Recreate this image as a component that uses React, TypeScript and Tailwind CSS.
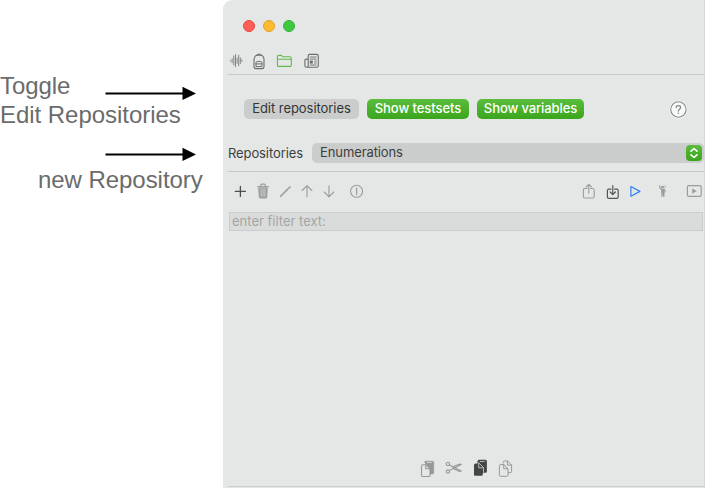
import type { ReactNode } from "react";

type IconProps = { w: number; h: number; className?: string; children: ReactNode };

function Icon({ w, h, className = "", children }: IconProps) {
  return (
    <svg
      width={w}
      height={h}
      viewBox={`0 0 ${w} ${h}`}
      fill="none"
      stroke="currentColor"
      strokeWidth="1.1"
      strokeLinecap="round"
      strokeLinejoin="round"
      className={`shrink-0 ${className}`}
    >
      {children}
    </svg>
  );
}

function Arrow({ className = "" }: { className?: string }) {
  return (
    <Icon w={92} h={14} className={`text-black ${className}`}>
      <path d="M.5 7.5H79" strokeWidth="2" strokeLinecap="butt" />
      <path d="M77.5 .7L91 7.5L77.5 14Z" fill="currentColor" stroke="none" />
    </Icon>
  );
}

function Notes() {
  return (
    <div className="h-[488px] w-[223px] shrink-0 overflow-hidden whitespace-nowrap bg-white pt-[71px] font-['Liberation_Sans',Arial,sans-serif] text-[24px] leading-[29px] text-[#6b6b6b]">
      <div className="flex h-[29px]">
        <span className="w-[105px] tracking-[-0.1px]">Toggle</span>
        <Arrow className="mt-[15px]" />
      </div>
      <div className="tracking-[-0.04px]">Edit Repositories</div>
      <Arrow className="ml-[105px] mt-[18px]" />
      <div className="ml-[38px] mt-[4px] tracking-[-0.05px]">new Repository</div>
    </div>
  );
}

function TitleBar() {
  return (
    <div className="ml-[20px] flex h-[52px] gap-2 pt-[20px]">
      <div className="size-3 rounded-full border border-[#e5473f] bg-[#fe5f57]" />
      <div className="size-3 rounded-full border border-[#e2a12c] bg-[#febb2e]" />
      <div className="size-3 rounded-full border border-[#32b334] bg-[#3ec840]" />
    </div>
  );
}

function Navigator() {
  return (
    <div className="ml-[5px] flex h-[23px] items-start border-b border-[#c6c8c7] pl-px pt-px text-[#6c6e6d]">
      <Icon w={14} h={16}>
        <path
          d="M1.4 7v1.4M3.1 5.4v4.8M4.8 2.6v9.8M6.5 1.2v13M8.1 4.6v6.2M9.7 1.8v11.4M11.3 4.4v6.6M12.8 6.4v2.4"
          strokeWidth="0.8"
          strokeLinecap="butt"
        />
      </Icon>
      <Icon w={12} h={17} className="ml-[10px]">
        <path d="M3.6 2.4Q6 -.4 8.4 2.4" />
        <path d="M1 6.6Q1.2 2.4 4.6 2.1H7.4Q10.8 2.4 11 6.6V13.6Q11 15.6 9 15.6H3Q1 15.6 1 13.6Z" />
        <path d="M3 13.2V9.8q0-1.3 1.3-1.3h3.4Q9 8.5 9 9.8v3.4ZM3 10.9h6" strokeWidth="1" />
      </Icon>
      <Icon w={16} h={16} className="ml-[11px] text-[#61bc4a]">
        <path d="M1.4 12V3.9Q1.4 2.4 2.9 2.4H5.4l1.4 1.4H13.9q1.4 0 1.4 1.4v6.8Q15.3 13.4 13.9 13.4H2.8Q1.4 13.4 1.4 12ZM1.4 6.2h13.9" />
      </Icon>
      <Icon w={16} h={16} className="ml-[12px]">
        <path d="M4.2 12.8V2.9Q4.2 1.4 5.4 1.4h7.4Q14.3 1.4 14.3 2.9v9.8q0 1.6-1.6 1.6H2.5Q.9 14.3 .9 12.7V7.4q0-1.3 1.3-1.3h2v6.6q0 1.6-1.6 1.6" />
        <path d="M6.2 4h6M6.2 6.1h6M10.6 8.2h1.6M10.6 10.1h1.6M6.2 12h6" strokeWidth=".9" />
        <rect x="5.8" y="7.6" width="3" height="3" fill="currentColor" stroke="none" />
      </Icon>
    </div>
  );
}

function Actions() {
  return (
    <div className="flex h-[68px] pl-[21px] pt-[24px] text-[13px] leading-[19px]">
      <div className="h-5 w-[115px] rounded-[5px] bg-[#cbcdcc] text-center tracking-[-0.05px] text-[#333534]">
        Edit repositories
      </div>
      <div className="ml-2 h-5 w-[102px] rounded-[5px] bg-linear-to-b from-[#5abd3c] to-[#3ba51b] text-center font-medium tracking-[-0.05px] text-white">
        Show testsets
      </div>
      <div className="ml-2 h-5 w-[107px] rounded-[5px] bg-linear-to-b from-[#5abd3c] to-[#3ba51b] text-center font-medium tracking-[-0.1px] text-white">
        Show variables
      </div>
      <Icon w={20} h={20} className="ml-[84px] text-[#858786]">
        <circle cx="10.4" cy="10.5" r="9" fill="#f8f9f9" stroke="none" />
        <circle cx="10.4" cy="10.5" r="7.7" strokeWidth="1.1" />
        <path d="M8.2 8.5Q8.2 6.7 10.4 6.7t2.2 1.8Q12.6 9.5 11.4 10.2Q10.4 10.8 10.4 12" strokeWidth="1.3" />
        <circle cx="10.4" cy="14.2" r=".8" fill="currentColor" stroke="none" />
      </Icon>
    </div>
  );
}

function RepositoryPicker() {
  return (
    <div className="ml-[5px] flex h-[29px] border-b border-[#c6c8c7] text-[13px] leading-[19px] text-[#3d3f3e]">
      <div className="w-[84px] pt-px tracking-[-0.1px]">Repositories</div>
      <div className="flex h-5 w-[392px] items-center justify-between rounded-[5px] bg-[#cbcdcc] pl-2 pr-[2px]">
        <span className="-mt-px tracking-[-0.1px]">Enumerations</span>
        <div className="h-4 w-4 rounded-[4px] bg-linear-to-b from-[#5abd3c] to-[#3ba51b] text-white">
          <Icon w={16} h={16}>
            <path d="M5 6.2L8 3.5L11 6.2M5 9.8L8 12.5L11 9.8" strokeWidth="1.6" />
          </Icon>
        </div>
      </div>
    </div>
  );
}

function Toolbar() {
  return (
    <div className="ml-[5px] flex h-[40px] items-start pt-[11px] text-[#9b9d9c]">
      <Icon w={12} h={16} className="ml-[6px] text-[#4c4e4d]">
        <path d="M6.4 3.4v10M1.4 8.4h10" strokeWidth="1.3" />
      </Icon>
      <Icon w={12} h={16} className="ml-[11px]">
        <path d="M3.8 3.2V2Q3.8 1.1 4.6 1.1h2.8q.8 0 .8.9V3.2M.6 3.7h10.8" strokeWidth="1.2" />
        <path d="M1.2 4.4h9.6L10.2 14q-.1 1.4-1.4 1.4H3.2Q1.9 15.4 1.8 14Z" fill="currentColor" stroke="none" />
        <path d="M4 6l.2 7.2M6 6v7.2M8 6l-.2 7.2" stroke="#dfe1e0" strokeWidth=".7" />
      </Icon>
      <Icon w={12} h={16} className="ml-[10px]">
        <path d="M1.6 13.3L9 5.9" strokeWidth="1.6" />
        <path d="M10.1 4.8L10.8 4.1" strokeWidth="1.8" />
      </Icon>
      <Icon w={12} h={16} className="ml-[10px]">
        <path d="M6 13.8V2.8M1.2 7.5L6 2.6L10.8 7.5" />
      </Icon>
      <Icon w={12} h={16} className="ml-[10px]">
        <path d="M6 2.7v11M1.2 9L6 13.9L10.8 9" />
      </Icon>
      <Icon w={14} h={16} className="ml-[15px]">
        <circle cx="6.6" cy="8.3" r="6" />
        <path d="M6.6 5v6.6" strokeWidth="1.2" />
      </Icon>
      <Icon w={14} h={17} className="ml-[218px]">
        <path d="M5 5.5H2.8Q1.4 5.5 1.4 7v6.6Q1.4 15 2.8 15h8q1.4 0 1.4-1.4V7q0-1.5-1.4-1.5H8.6M6.8 10.3V1.6M4.2 4L6.8 1.4L9.4 4" />
      </Icon>
      <Icon w={14} h={17} className="ml-[10px] text-[#535554]">
        <path d="M5 6.2H2.8Q1.4 6.2 1.4 7.7v6.3Q1.4 15.4 2.8 15.4h8q1.4 0 1.4-1.4V7.7q0-1.5-1.4-1.5H8.6M6.8 2.7v8.7M4.2 9L6.8 11.6L9.4 9" strokeWidth="1.2" />
      </Icon>
      <Icon w={12} h={16} className="ml-[9px] text-[#2f82f7]">
        <path d="M1.9 3.5L10.9 8.4L1.9 13.3Z" strokeWidth="1.2" />
      </Icon>
      <Icon w={10} h={16} className="ml-[17px]">
        <circle cx="4.6" cy="4.2" r="1.35" fill="currentColor" stroke="none" />
        <path d="M1.6 2.8L2.2 5.6L4 6.4M6.2 6.2L7 7.4V9" strokeWidth="1.1" />
        <path d="M3.1 5.9H6.6L6.4 13.9H5.2L4.8 10.6L4.3 13.9H3.4Z" fill="currentColor" stroke="none" />
        <path d="M7.2 3v1.4" strokeWidth=".9" />
      </Icon>
      <Icon w={16} h={16} className="ml-[18px]">
        <rect x="1.4" y="2.6" width="13.8" height="10.8" rx="1.4" strokeWidth="1.2" />
        <path d="M6.2 5.4v5.4L10.8 8.1Z" fill="currentColor" stroke="none" />
      </Icon>
    </div>
  );
}

function EditBar() {
  return (
    <div className="ml-[5px] flex h-[28px] items-start border-b border-[#cbcdcc] pl-[192px] text-[#979998]">
      <Icon w={15} h={18} className="mt-px">
        <path d="M5 1.2h7.4q1.4 0 1.4 1.4v10.1q0 1.3-1.4 1.3H10V8L5 3Z" fill="currentColor" strokeWidth=".5" />
        <path d="M7.4 2.5h4" stroke="#e5e7e6" strokeWidth=".7" />
        <path d="M1.5 6Q1.5 4.7 2.9 4.7H5.9L10 8.7V15.2Q10 16.5 8.7 16.5H2.8Q1.5 16.5 1.5 15.2ZM5.8 4.8V8.8H9.9" fill="#e5e7e6" strokeWidth="1.1" />
      </Icon>
      <Icon w={18} h={16} className="ml-[10px] mt-px">
        <circle cx="2.9" cy="4" r="1.7" />
        <circle cx="2.9" cy="11.6" r="1.7" />
        <path d="M4.5 5L16.3 10.9L14.6 11.5L8.5 8.7M4.5 10.6L8.5 8.2L16.3 4.6L14.6 4L7.2 6.9" strokeWidth="1.1" />
      </Icon>
      <Icon w={15} h={18} className="ml-[10px] text-[#444645]">
        <path d="M4.5 2.2Q4.5.7 6 .7h6.4Q13.9.7 13.9 2.2v10.2q0 1.4-1.5 1.4H4.5Z" fill="currentColor" stroke="none" />
        <path d="M1 6Q1 4.5 2.5 4.5H5.5L9.8 8.8V15.2Q9.8 16.7 8.3 16.7H2.4Q1 16.7 1 15.2Z" fill="currentColor" stroke="none" />
        <path d="M5.7 4.5V8.8H9.8M5.5 3.7L10.5 8.4V13M7.2 2.5h4" stroke="#e5e7e6" strokeWidth=".7" />
      </Icon>
      <Icon w={15} h={18} className="ml-[10px] mt-px">
        <path d="M5.2 3V2.2Q5.2 1 6.5 1H9.6L13.6 5V11.4Q13.6 12.7 12.3 12.7H10.3M9.4 1.2V5.1H13.4" strokeWidth="1" />
        <path d="M1.4 6Q1.4 4.5 2.9 4.5H5.8L10 8.7V15Q10 16.3 8.7 16.3H2.7Q1.4 16.3 1.4 15ZM5.7 4.6V8.7H9.8" strokeWidth="1" />
      </Icon>
    </div>
  );
}

export default function App() {
  return (
    <main className="flex h-[488px] w-[706px] overflow-hidden bg-white">
      <Notes />
      <section className="flex h-[488px] w-[482px] shrink-0 flex-col rounded-tl-[9px] border-r border-[#d7d9d8] bg-[#e5e7e6] font-['Inter','Liberation_Sans',sans-serif]">
        <TitleBar />
        <Navigator />
        <Actions />
        <RepositoryPicker />
        <Toolbar />
        <div className="ml-[6px] mr-px h-[19px] border border-[#cbcdcc] bg-[#dadcdb] pl-[2px] text-[13px] leading-[17px] tracking-[0px] text-[#a4a6a5]">
          enter filter text:
        </div>
        <div className="grow" />
        <EditBar />
        <div className="h-px shrink-0" />
      </section>
    </main>
  );
}
